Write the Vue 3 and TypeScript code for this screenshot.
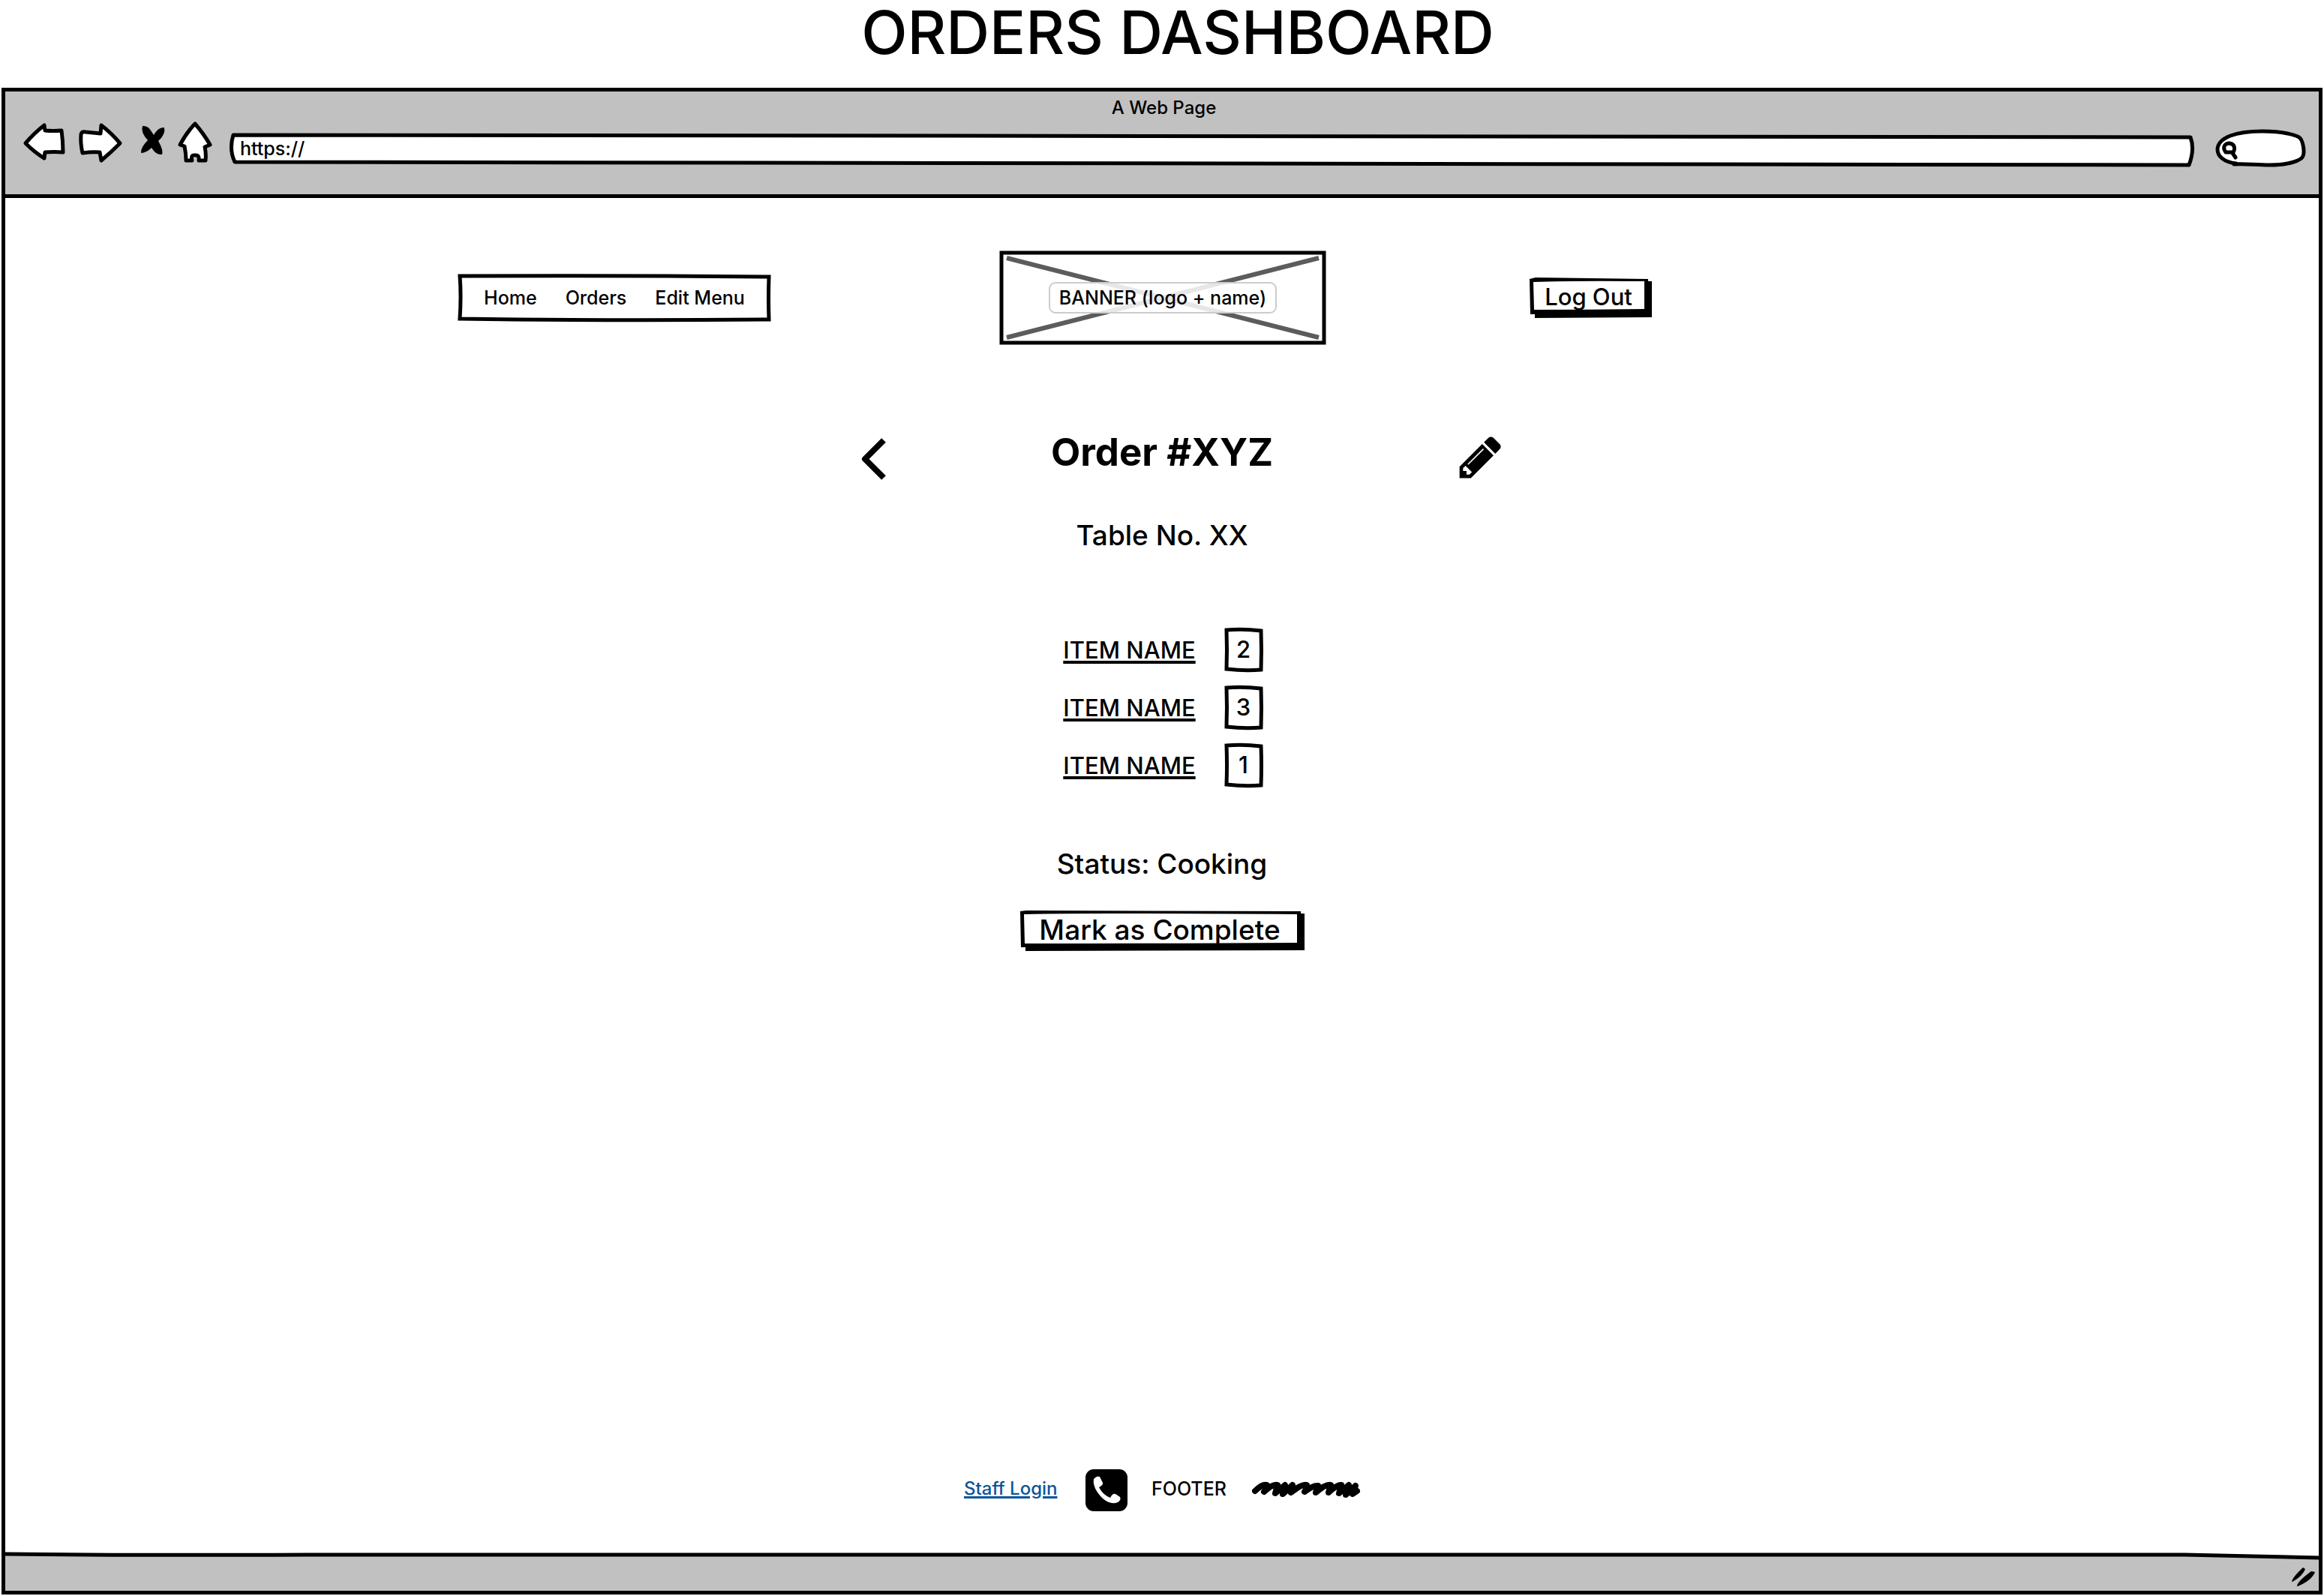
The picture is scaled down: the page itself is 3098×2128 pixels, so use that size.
<script setup lang="ts">
import { ref } from 'vue'

interface OrderItem {
  id: number
  name: string
  quantity: number
}

const address = ref('https://')
const search = ref('')
const links: string[] = ['Home', 'Orders', 'Edit Menu']
const items: OrderItem[] = [
  { id: 1, name: 'ITEM NAME', quantity: 2 },
  { id: 2, name: 'ITEM NAME', quantity: 3 },
  { id: 3, name: 'ITEM NAME', quantity: 1 },
]
</script>

<template>
  <div class="page">
    <h1 class="page-title">ORDERS DASHBOARD</h1>

    <div class="window">
      <header class="chrome">
        <div class="chrome-title">A Web Page</div>
        <div class="toolbar">
          <button class="tool" type="button" aria-label="Back">
            <svg width="62" height="64" viewBox="28 161 62 64">
              <path class="shape" d="M34 191Q46 177 59 167L60 174Q71 175 82 174Q84 188 84 203Q72 202 60 203L59 211Q46 203 34 191Z" />
            </svg>
          </button>
          <button class="tool" type="button" aria-label="Forward">
            <svg width="64" height="64" viewBox="102 161 64 64">
              <path class="shape" d="M108 179Q109 175 114 176L134 178L135 167Q148 177 160 191Q148 203 135 214L133 203Q123 202 110 204Q107 191 108 179Z" />
            </svg>
          </button>
          <button class="tool" type="button" aria-label="Stop">
            <svg width="46" height="64" viewBox="178 161 46 64">
              <path d="M190 168Q197 167 201 174L205 180Q211 169 219 170Q221 179 211 188Q218 200 216 206Q208 207 202 197Q195 204 188 204Q187 197 197 187Q187 176 190 168Z" />
            </svg>
          </button>
          <button class="tool" type="button" aria-label="Home">
            <svg width="48" height="64" viewBox="236 161 48 64">
              <path class="shape" d="M260 165Q272 179 280 193L273 196Q275 205 274 214H265Q266 206 260 207Q254 206 256 214L248 214Q248 205 246 195L240 193Q249 176 260 165Z" />
            </svg>
          </button>
          <div class="address">
            <svg class="frame" viewBox="0 0 2616 44" preserveAspectRatio="none">
              <path class="shape" d="M5 3Q900 1 2611 6Q2617 22 2609 43Q1300 38 7 39Q-1 22 5 3Z" />
            </svg>
            <input v-model="address" type="text" aria-label="Address" />
          </div>
          <div class="search">
            <svg class="frame" viewBox="2952 172 122 52">
              <path class="shape" d="M2980 218C2963 216 2955 208 2955 199C2956 183 2980 175 3015 175C3045 175 3062 181 3065 184C3070 190 3071 204 3069 208C3067 214 3050 220 3025 220C3005 220 2992 218 2977 219" />
              <path class="shape" d="M2966 203C2961 196 2965 191 2971 191C2978 192 2979 198 2976 203ZM2975 204L2979 210" />
            </svg>
            <input v-model="search" type="text" aria-label="Search" />
          </div>
        </div>
      </header>

      <main class="content">
        <div class="top-row">
          <nav class="nav">
            <svg class="frame" viewBox="0 0 418 64" preserveAspectRatio="none">
              <path class="outline" d="M3 3Q200 2 415 4Q414 32 415 61Q200 63 3 60Q5 30 3 3Z" />
            </svg>
            <a v-for="link in links" :key="link" href="#">{{ link }}</a>
          </nav>
          <div class="banner">
            <svg class="frame" viewBox="0 0 436 126" preserveAspectRatio="none">
              <path class="outline" d="M3 3H433V123H3Z" />
              <path class="cross" d="M10 10L426 116M10 116L426 10" />
            </svg>
            <span>BANNER (logo + name)</span>
          </div>
          <button class="sketch-button logout" type="button">
            <svg class="frame" viewBox="0 0 163 54" preserveAspectRatio="none">
              <path d="M0 2L8 0L158 2V5H163V53L7 54V49H1Z" />
              <path class="face" d="M5 6Q60 4 153 5V42Q80 43 6 43Z" />
            </svg>
            <span>Log Out</span>
          </button>
        </div>

        <div class="order-row">
          <button class="tool back" type="button" aria-label="Back to orders">
            <svg width="36" height="70" viewBox="1146 570 36 70">
              <path class="chevron" d="M1178 586L1153 611L1178 636" />
            </svg>
          </button>
          <h2>Order #XYZ</h2>
          <button class="tool edit" type="button" aria-label="Edit order">
            <svg width="60" height="70" viewBox="1944 570 60 70">
              <path transform="translate(1941 576) scale(.0363)" d="M491 1536l91-91-235-235-91 91v107h128v128h107zm523-928q0-22-22-22-10 0-17 7l-542 542q-7 7-7 17 0 22 22 22 10 0 17-7l542-542q7-7 7-17zm-54-192l416 416-832 832h-416v-416zm683 96q0 53-37 90l-166 166-416-416 166-165q36-38 90-38 53 0 91 38l235 234q37 39 37 91z" />
            </svg>
          </button>
        </div>

        <p class="table-no">Table No. XX</p>

        <ul class="items">
          <li v-for="item in items" :key="item.id">
            <a href="#">{{ item.name }}</a>
            <span class="quantity">
              <svg class="frame" viewBox="0 0 52 59" preserveAspectRatio="none">
                <path class="outline" d="M3 3Q25 1 49 4Q50 30 49 56Q28 58 3 55Q4 30 3 3Z" />
              </svg>
              <span>{{ item.quantity }}</span>
            </span>
          </li>
        </ul>

        <p class="status">Status: Cooking</p>
        <button class="sketch-button complete" type="button">
          <svg class="frame" viewBox="0 0 379 54" preserveAspectRatio="none">
            <path d="M0 1L8 0L374 1V4H379V53L7 54V49H1Z" />
            <path class="face" d="M5 5Q60 3 369 5V43Q200 44 6 44Z" />
          </svg>
          <span>Mark as Complete</span>
        </button>

        <footer class="footer">
          <a class="staff" href="#">Staff Login</a>
          <svg width="56" height="56" viewBox="1447 1959 56 56">
            <rect x="1447" y="1959" width="56" height="56" rx="11" />
            <path class="face" d="M1458 1972Q1462 1967 1466 1969L1470 1977Q1471 1980 1465 1983Q1470 1993 1480 1997Q1483 1991 1487 1992L1493 1996Q1495 2000 1490 2003Q1481 2007 1470 1998Q1456 1984 1458 1972Z" />
          </svg>
          <span class="footer-label">FOOTER</span>
          <svg width="144" height="24" viewBox="1670 1975 144 24">
            <path class="scribble" d="M1674 1988Q1684 1978 1690 1980Q1690 1984 1686 1989Q1698 1978 1704 1980L1701 1991L1714 1980L1711 1992L1724 1980L1722 1990Q1737 1978 1743 1980Q1744 1983 1740 1989Q1752 1980 1758 1981L1755 1990Q1769 1978 1775 1980L1772 1990Q1784 1979 1789 1980L1786 1991L1799 1980L1795 1993L1808 1981L1804 1992L1810 1988" />
          </svg>
        </footer>
      </main>

      <div class="status-bar">
        <svg class="frame" viewBox="0 0 3084 51" preserveAspectRatio="none">
          <path class="sky" d="M0 0H3084V6L2905 2H0Z" />
          <path class="outline" d="M0 2Q150 4 400 3H2905L3084 7" />
        </svg>
        <svg class="grip" width="34" height="28" viewBox="3054 2089 34 28">
          <path d="M3055 2109Q3056 2103 3070 2090L3073 2092Q3070 2101 3056 2109ZM3062 2115Q3062 2109 3081 2095L3086 2096Q3082 2107 3063 2115Z" />
        </svg>
      </div>
    </div>
  </div>
</template>

<style>
body {
  margin: 0;
  background: #fff;
}
</style>

<style scoped>
.page {
  display: flex;
  flex-direction: column;
  box-sizing: border-box;
  min-height: 100vh;
  padding: 0 2px 2px;
  color: #000;
  font-family: Inter, "Liberation Sans", sans-serif;
  font-size: 25px;
  font-weight: 500;
}

h1,
h2,
p,
ul {
  margin: 0;
  padding: 0;
}

a {
  color: inherit;
}

button,
input {
  padding: 0;
  border: 0;
  background: none;
  color: inherit;
  font: inherit;
}

svg {
  display: block;
  flex: none;
}

.frame {
  position: absolute;
  inset: 0;
  width: 100%;
  height: 100%;
  overflow: visible;
}

.shape {
  fill: #fff;
  stroke: #000;
  stroke-width: 5px;
  stroke-linejoin: round;
  stroke-linecap: round;
}

.outline {
  fill: none;
  stroke: #000;
  stroke-width: 5px;
}

.face,
.sky {
  fill: #fff;
}

.page-title {
  padding: 0 0 31px 42px;
  font-size: 80px;
  font-weight: 500;
  line-height: 86px;
  text-align: center;
}

.window {
  display: flex;
  flex: 1;
  flex-direction: column;
  border: 5px solid #000;
}

.chrome {
  padding: 4px 16px 34px 21px;
  border-bottom: 5px solid #000;
  background: #c1c1c1;
}

.chrome-title {
  font-size: 24px;
  line-height: 35px;
  text-align: center;
}

.toolbar {
  display: flex;
  align-items: center;
  gap: 12px;
}

.address {
  position: relative;
  flex: 1;
  height: 44px;
  margin: 12px 16px 0 10px;
}

.address input {
  position: relative;
  box-sizing: border-box;
  width: 100%;
  height: 42px;
  padding: 0 14px;
}

.search {
  position: relative;
  width: 122px;
  height: 52px;
  margin-top: 10px;
}

.search input {
  position: relative;
  box-sizing: border-box;
  width: 100%;
  height: 52px;
  padding: 0 14px 0 32px;
}

.content {
  display: flex;
  flex: 1;
  flex-direction: column;
  align-items: center;
  padding: 70px 0 55px;
}

.top-row,
.order-row {
  display: grid;
  grid-template-columns: 1fr auto 1fr;
  align-items: center;
  box-sizing: border-box;
  width: 100%;
}

.top-row {
  padding-left: 2px;
}

.nav {
  position: relative;
  display: flex;
  justify-content: center;
  justify-self: end;
  gap: 38px;
  width: 418px;
  margin-right: 304px;
  line-height: 64px;
}

.nav a {
  position: relative;
  text-decoration: none;
}

.banner {
  position: relative;
  display: grid;
  place-items: center;
  width: 436px;
  height: 126px;
}

.banner span {
  position: relative;
  box-sizing: border-box;
  width: 304px;
  border: 2px solid #ccc;
  border-radius: 9px;
  background: rgba(255, 255, 255, 0.85);
  line-height: 38px;
  text-align: center;
  white-space: nowrap;
}

.cross {
  fill: none;
  stroke: #5c5c5e;
  stroke-width: 6px;
}

.sketch-button {
  position: relative;
  height: 54px;
}

.sketch-button span {
  position: relative;
  display: block;
  padding: 0 6px 2px 0;
  line-height: 46px;
}

.sketch-button.logout {
  justify-self: start;
  width: 163px;
  margin-left: 271px;
  font-size: 31px;
}

.order-row {
  margin-top: 111px;
}

.order-row h2 {
  width: 300px;
  padding-bottom: 6px;
  font-size: 51px;
  font-weight: 700;
  line-height: 64px;
  text-align: center;
  white-space: nowrap;
}

.back {
  justify-self: end;
  margin-right: 217px;
}

.edit {
  justify-self: start;
  margin-left: 245px;
}

.chevron {
  fill: none;
  stroke: #000;
  stroke-width: 8px;
  stroke-linejoin: round;
}

.table-no,
.status {
  font-size: 37px;
  line-height: 48px;
}

.table-no {
  margin-top: 49px;
}

.items {
  display: grid;
  gap: 18px;
  margin-top: 99px;
  font-size: 31px;
  line-height: 59px;
  list-style: none;
}

.items li {
  display: flex;
  gap: 35px;
}

.items a {
  width: 182px;
  text-align: center;
  text-decoration-thickness: 4px;
  text-underline-offset: 3px;
  white-space: nowrap;
}

.quantity {
  position: relative;
  width: 52px;
  height: 59px;
  line-height: 57px;
  text-align: center;
}

.quantity span {
  position: relative;
}

.status {
  margin-top: 78px;
}

.complete {
  width: 379px;
  margin-top: 38px;
  font-size: 37px;
}

.footer {
  display: flex;
  align-items: center;
  gap: 32px;
  margin-top: auto;
  line-height: 30px;
}

.staff,
.footer-label {
  padding-bottom: 4px;
}

.staff {
  width: 130px;
  color: #0b559b;
  font-size: 24px;
  text-decoration-thickness: 3px;
  text-underline-offset: 2px;
  white-space: nowrap;
}

.footer-label {
  width: 102px;
}

.scribble {
  fill: none;
  stroke: #000;
  stroke-width: 8px;
  stroke-linejoin: round;
  stroke-linecap: round;
}

.status-bar {
  position: relative;
  display: flex;
  justify-content: flex-end;
  padding: 19px 3px 4px;
  background: #c1c1c1;
}

.grip {
  position: relative;
}
</style>
